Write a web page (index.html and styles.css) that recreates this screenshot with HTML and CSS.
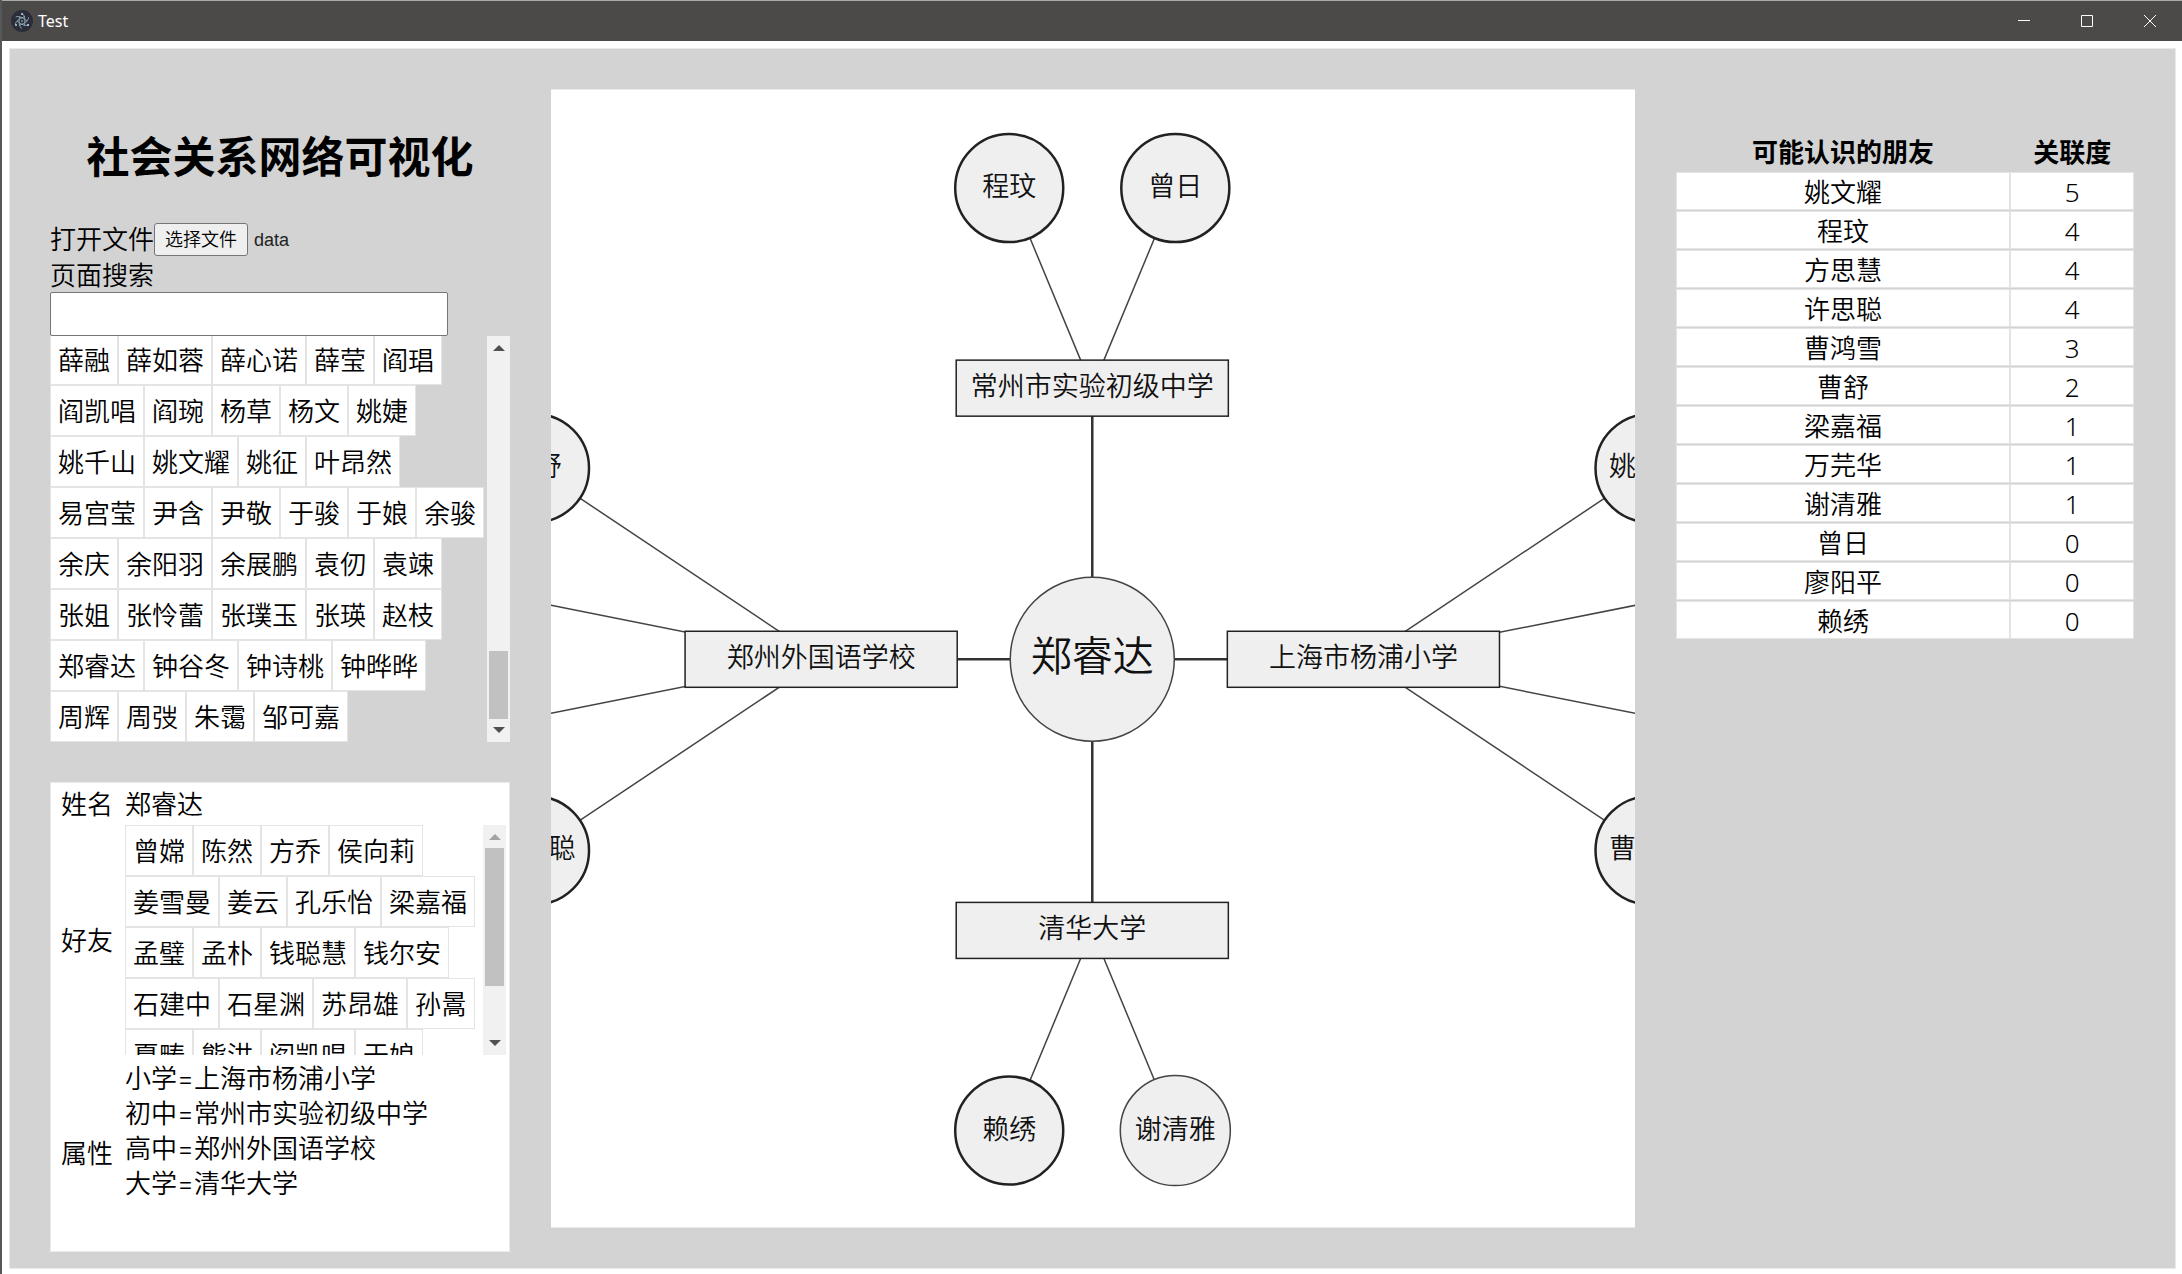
FILE: index.html
```html
<!DOCTYPE html>
<html lang="zh-CN">
<head>
<meta charset="utf-8">
<title>Test</title>
<link rel="stylesheet" href="styles.css">
</head>
<body>
<header class="titlebar">
  <svg class="logo" viewBox="0 0 22 22" aria-hidden="true">
    <circle cx="11" cy="11" r="11" fill="#2b2e3a"/>
    <g fill="none" stroke="#a9cdd6" stroke-width=".8" opacity=".85">
      <ellipse cx="11" cy="11" rx="7.4" ry="2.9" transform="rotate(30 11 11)" stroke-dasharray="13 4"/>
      <ellipse cx="11" cy="11" rx="7.4" ry="2.9" transform="rotate(-30 11 11)" stroke-dasharray="13 4"/>
      <ellipse cx="11" cy="11" rx="7.4" ry="2.9" transform="rotate(90 11 11)" stroke-dasharray="13 4"/>
    </g>
    <g fill="#b4d8e0"><circle cx="11" cy="11" r=".8"/><circle cx="11" cy="4" r="1"/><circle cx="5" cy="15" r="1"/><circle cx="17" cy="15" r="1"/></g>
  </svg>
  <span class="title">Test</span>
  <div class="window-buttons">
    <button type="button" aria-label="最小化"><svg viewBox="0 0 12 12"><path d="M0 5.5h12"/></svg></button>
    <button type="button" aria-label="最大化"><svg viewBox="0 0 12 12"><path d="M.5.5h11v11H.5z"/></svg></button>
    <button type="button" aria-label="关闭"><svg viewBox="0 0 12 12"><path d="M0 0l12 12M12 0L0 12"/></svg></button>
  </div>
</header>

<main class="app">
  <section class="side">
    <h1>社会关系网络可视化</h1>
    <div class="file-row">
      <label for="open">打开文件</label><button type="button" id="open">选择文件</button><span class="file-name">data</span>
    </div>
    <label class="search-label" for="search">页面搜索</label>
    <input class="search" id="search" type="text">
    <div class="scroll people">
      <ul class="names">
        <li>薛融</li><li>薛如蓉</li><li>薛心诺</li><li>薛莹</li><li>阎琩</li>
        <li>阎凯唱</li><li>阎琬</li><li>杨草</li><li>杨文</li><li>姚婕</li>
        <li>姚千山</li><li>姚文耀</li><li>姚征</li><li>叶昂然</li>
        <li>易宫莹</li><li>尹含</li><li>尹敬</li><li>于骏</li><li>于娘</li><li>余骏</li>
        <li>余庆</li><li>余阳羽</li><li>余展鹏</li><li>袁仞</li><li>袁竦</li>
        <li>张姐</li><li>张怜蕾</li><li>张璞玉</li><li>张瑛</li><li>赵枝</li>
        <li>郑睿达</li><li>钟谷冬</li><li>钟诗桃</li><li>钟晔晔</li>
        <li>周辉</li><li>周弢</li><li>朱霭</li><li>邹可嘉</li>
      </ul>
      <div class="bar"><i class="up"></i><div class="track"><div class="thumb low"></div></div><i class="down"></i></div>
    </div>
    <dl class="info">
      <dt>姓名</dt><dd>郑睿达</dd>
      <dt>好友</dt>
      <dd class="scroll friends">
        <ul class="names">
          <li>曾嫦</li><li>陈然</li><li>方乔</li><li>侯向莉</li>
          <li>姜雪曼</li><li>姜云</li><li>孔乐怡</li><li>梁嘉福</li>
          <li>孟璧</li><li>孟朴</li><li>钱聪慧</li><li>钱尔安</li>
          <li>石建中</li><li>石星渊</li><li>苏昂雄</li><li>孙暠</li>
          <li>夏畴</li><li>熊洪</li><li>阎凯唱</li><li>于娘</li>
        </ul>
        <div class="bar"><i class="up off"></i><div class="track"><div class="thumb high"></div></div><i class="down"></i></div>
      </dd>
      <dt>属性</dt>
      <dd class="attrs">小学=上海市杨浦小学<br>初中=常州市实验初级中学<br>高中=郑州外国语学校<br>大学=清华大学</dd>
    </dl>
  </section>

  <section class="graph">
    <svg viewBox="-541 -569 1083 1136" preserveAspectRatio="xMidYMid slice" role="img" aria-label="关系图">
      <g class="edge strong">
        <path d="M0 0V-271M0 0V271M0 0H-271M0 0H271"/>
      </g>
      <g class="edge">
        <path d="M0-271L-83-471M0-271L83-471M0 271L-83 471M0 271L83 471"/>
        <path d="M-271 0L-557-191M-271 0L-557 191M-271 0L-541-54M-271 0L-541 54"/>
        <path d="M271 0L557-191M271 0L557 191M271 0L543-54M271 0L543 54"/>
      </g>
      <g class="node">
        <circle class="thin" r="82"/>
        <rect x="-136" y="-299" width="272" height="56"/>
        <rect x="-136" y="243" width="272" height="56"/>
        <rect x="-407" y="-28" width="272" height="56"/>
        <rect x="135" y="-28" width="272" height="56"/>
        <circle cx="-83" cy="-471" r="54"/><circle cx="83" cy="-471" r="54"/>
        <circle cx="-83" cy="471" r="54"/><circle class="thin" cx="83" cy="471" r="55"/>
        <circle cx="-557" cy="-191" r="54"/><circle cx="-557" cy="191" r="54"/>
        <circle cx="557" cy="-191" r="54"/><circle cx="557" cy="191" r="54"/>
      </g>
      <g class="caption">
        <text class="big" x="0" y="12">郑睿达</text>
        <text x="0" y="-263">常州市实验初级中学</text>
        <text x="0" y="279">清华大学</text>
        <text x="-271" y="8">郑州外国语学校</text>
        <text x="271" y="8">上海市杨浦小学</text>
        <text x="-83" y="-463">程玟</text><text x="83" y="-463">曾日</text>
        <text x="-83" y="479">赖绣</text><text x="83" y="479">谢清雅</text>
        <text x="-557" y="-183">曹舒</text><text x="-557" y="199">许思聪</text>
        <text x="557" y="-183">姚文耀</text><text x="557" y="199">曹鸿雪</text>
      </g>
    </svg>
  </section>

  <section class="suggest">
    <table>
      <thead><tr><th class="who">可能认识的朋友</th><th>关联度</th></tr></thead>
      <tbody>
        <tr><td>姚文耀</td><td>5</td></tr>
        <tr><td>程玟</td><td>4</td></tr>
        <tr><td>方思慧</td><td>4</td></tr>
        <tr><td>许思聪</td><td>4</td></tr>
        <tr><td>曹鸿雪</td><td>3</td></tr>
        <tr><td>曹舒</td><td>2</td></tr>
        <tr><td>梁嘉福</td><td>1</td></tr>
        <tr><td>万芫华</td><td>1</td></tr>
        <tr><td>谢清雅</td><td>1</td></tr>
        <tr><td>曾日</td><td>0</td></tr>
        <tr><td>廖阳平</td><td>0</td></tr>
        <tr><td>赖绣</td><td>0</td></tr>
      </tbody>
    </table>
  </section>
</main>
</body>
</html>
```
FILE: styles.css
```css
* { box-sizing: border-box; }
body {
  margin: 0;
  min-height: 100vh;
  display: flex;
  flex-direction: column;
  border-left: 2px solid #55585a;
  background: #fff;
  color: #000;
  font: 350 26px/35px "Noto Sans", "Noto Sans CJK SC", sans-serif;
}
ul, dl, dd { margin: 0; padding: 0; list-style: none; }

/* window title bar */
.titlebar {
  display: flex;
  align-items: center;
  height: 41px;
  padding-left: 9px;
  border-top: 1px solid #a9aba8;
  background: #4c4a48;
  color: #fff;
}
.logo { width: 22px; height: 22px; }
.title { margin-left: 5px; font: 400 16px/20px "Noto Sans", sans-serif; }
.window-buttons { display: flex; margin-left: auto; padding-right: 1px; }
.window-buttons button {
  width: 63px;
  height: 40px;
  padding: 0;
  border: 0;
  background: none;
}
.window-buttons svg {
  display: block;
  width: 12px;
  height: 12px;
  margin: 0 auto;
  fill: none;
  stroke: #fff;
}

/* three-column page */
.app {
  flex: 1;
  display: grid;
  grid-template-columns: 460fr 1083fr 458fr;
  column-gap: 41px;
  align-items: start;
  margin: 7px 6px 6px 7px;
  padding: 40px 41px 16px 40px;
  border: 1px solid #eaeaea;
  background: #d3d3d3;
}

h1 {
  margin: 37px 0 33px;
  font-size: 43px;
  font-weight: 700;
  line-height: 62px;
  text-align: center;
}
.file-row { display: flex; align-items: center; height: 37px; }
.file-row button {
  height: 33px;
  padding: 0 10px;
  border: 1px solid #767676;
  border-radius: 3px;
  background: #efefef;
  color: #000;
  font: 350 18px/28px "Liberation Sans", "Noto Sans CJK SC", sans-serif;
}
.file-name { margin-left: 6px; font: 400 18px/28px "Liberation Sans", sans-serif; color: #222; }
.search-label { display: block; height: 34px; }
.search {
  display: block;
  width: 398px;
  height: 44px;
  padding: 0 8px;
  border: 1px solid #767676;
  border-radius: 2px;
  background: #fff;
  font: inherit;
}

/* wrapped name tiles with a scrollbar beside them */
.scroll { display: flex; overflow: hidden; }
.people { height: 406px; }
.people .names { align-content: flex-end; }
.friends { height: 230px; }
.names { flex: 1; display: flex; flex-wrap: wrap; align-content: flex-start; }
.names li {
  height: 51px;
  padding: 8px 7px 6px;
  border: 1px solid #e4e4e4;
  background: #fff;
  white-space: nowrap;
}
.bar {
  flex: none;
  display: flex;
  flex-direction: column;
  align-items: center;
  width: 23px;
  background: #f1f1f1;
}
.bar i { width: 0; margin: 9px 0 8px; border: 6px solid transparent; border-top: 0; border-bottom: 6px solid #505050; }
.bar .down { margin: 8px 0 9px; border-bottom: 0; border-top: 6px solid #505050; }
.bar .off { border-bottom-color: #a3a3a3; }
.track { flex: 1; display: flex; flex-direction: column; width: 19px; }
.thumb { background: #c1c1c1; }
.low { height: 68px; margin-top: auto; }
.high { height: 138px; }

.info {
  display: grid;
  grid-template-columns: 52px 1fr;
  grid-template-rows: auto auto 1fr;
  gap: 3px 12px;
  height: 470px;
  margin-top: 40px;
  padding: 4px 3px 3px 10px;
  border: 1px solid #eaeaea;
  background: #fff;
  align-items: center;
}
.attrs { align-self: start; padding-top: 3px; font-family: "Inter", "Noto Sans CJK SC", sans-serif; }

.graph { overflow: hidden; background: #fff; border-top: 1px solid #eaeaea; border-bottom: 1px solid #eaeaea; }
.graph svg { display: block; width: 100%; }
.edge { fill: none; stroke: #444; stroke-width: 1.5; }
.strong { stroke: #333; stroke-width: 2.5; }
.node { fill: #efefef; stroke: #222; stroke-width: 1.5; }
.node circle { stroke-width: 2.5; }
.node .thin { stroke: #444; stroke-width: 1.5; }
.caption { font-size: 27px; text-anchor: middle; fill: #111; }
.caption .big { font-size: 41px; }

.suggest { padding-top: 43px; }
.suggest table { width: 100%; border-collapse: separate; border-spacing: 0 1px; table-layout: fixed; }
.suggest th, .suggest td { height: 38px; padding: 0; text-align: center; }
.suggest th { font-weight: 700; }
.suggest .who { width: 73%; }
.suggest td { padding-top: 2px; border: 1px solid #e4e4e4; background: #fff; line-height: 34px; }
```
